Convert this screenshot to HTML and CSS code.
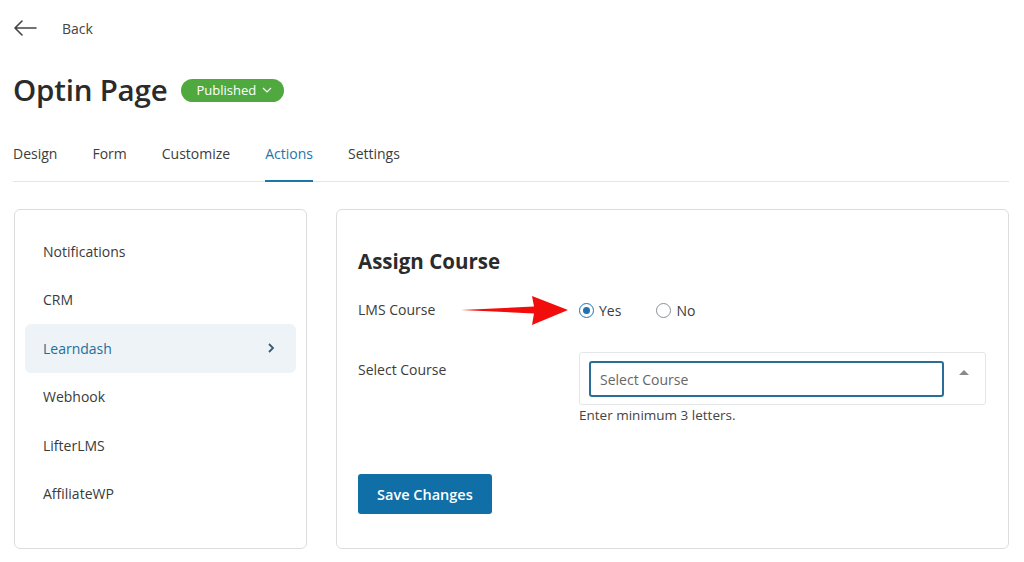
FILE: index.html
```html
<!DOCTYPE html>
<html lang="en">

<head>
  <meta charset="UTF-8">
  <meta name="viewport" content="width=device-width, initial-scale=1.0">
  <link rel="stylesheet" href="styles.css">
</head>

<body>
  <div class="page">
    <!-- Back link -->
    <a class="back" href="#">
      <svg class="back-icon" width="24" height="16" viewBox="0 0 24 16">
        <path d="M23 8H2M9 1L2 8l7 7" fill="none" stroke="#444" stroke-width="1.6" stroke-linecap="round" stroke-linejoin="round"/>
      </svg>
      <span>Back</span>
    </a>

    <div class="title-row">
      <h1>Optin Page</h1>
      <span class="status">Published
        <svg width="10" height="6" viewBox="0 0 10 6"><path d="M1 1l4 4 4-4" fill="none" stroke="#fff" stroke-width="1.2"/></svg>
      </span>
    </div>

    <nav class="tabs">
      <a href="#">Design</a>
      <a href="#">Form</a>
      <a href="#">Customize</a>
      <a href="#" class="active">Actions</a>
      <a href="#">Settings</a>
    </nav>

    <div class="columns">
      <aside class="card side-menu">
        <a href="#">Notifications</a>
        <a href="#">CRM</a>
        <a href="#" class="active">Learndash
          <svg width="8" height="10" viewBox="0 0 8 10"><path d="M2 1l4 4-4 4" fill="none" stroke="#3a5a70" stroke-width="1.8"/></svg>
        </a>
        <a href="#">Webhook</a>
        <a href="#">LifterLMS</a>
        <a href="#">AffiliateWP</a>
      </aside>

      <section class="card panel">
        <h2>Assign Course</h2>

        <div class="field lms">
          <label class="field-label">LMS Course</label>
          <div class="radios">
            <label class="radio checked"><span class="dot"></span>Yes</label>
            <label class="radio"><span class="dot"></span>No</label>
          </div>
          <!-- annotation arrow -->
          <svg class="pointer" width="110" height="32" viewBox="0 0 110 32">
            <path d="M1 16 L74 12.5 L72 2 L108 16 L72 31 L74 19.5 Z" fill="#f20d0d"/>
          </svg>
        </div>

        <div class="field">
          <label class="field-label select-label">Select Course</label>
          <div class="select-wrap">
            <div class="select-box">
              <input type="text" placeholder="Select Course">
              <span class="caret"></span>
            </div>
            <p class="hint">Enter minimum 3 letters.</p>
          </div>
        </div>

        <button type="button" class="save">Save Changes</button>
      </section>
    </div>
  </div>
</body>

</html>
```

FILE: styles.css
```css
body, html {
  margin: 0;
  padding: 0;
  font-family: "Open Sans", "Noto Sans", sans-serif;
  background-color: #ffffff;
  color: #333333;
}

a {
  text-decoration: none;
  color: inherit;
}

.page {
  padding: 0 15px 0 13px;
}

/* Back link */
.back {
  display: flex;
  align-items: center;
  height: 56px;
  font-size: 14px;
  color: #444444;
}

.back-icon {
  margin-right: 25px;
}

.title-row {
  display: flex;
  align-items: center;
  height: 66px;
}

.title-row h1 {
  margin: 0;
  font-size: 29.5px;
  font-weight: 600;
  color: #2b2b2b;
  letter-spacing: -0.2px;
}

.status {
  display: inline-flex;
  align-items: center;
  gap: 6px;
  margin-left: 14px;
  margin-top: 2px;
  height: 23px;
  padding: 0 12px 0 15px;
  border-radius: 12px;
  background-color: #4fa93f;
  color: #ffffff;
  font-size: 13px;
}

/* Tabs */
.tabs {
  display: flex;
  height: 59px;
  border-bottom: 1px solid #e2e4e7;
}

.tabs a {
  display: flex;
  align-items: center;
  padding-top: 5px;
  margin-right: 35px;
  font-size: 14px;
  color: #3c3c3c;
  border-bottom: 2px solid transparent;
  margin-bottom: -1px;
}

.tabs a.active {
  color: #1e76a6;
  border-bottom-color: #1e76a6;
}

/* Columns */
.columns {
  display: flex;
  gap: 29px;
  margin-top: 27px;
}

.card {
  border: 1px solid #dcdcde;
  border-radius: 6px;
  background: #ffffff;
  height: 340px;
  box-sizing: border-box;
}

.side-menu {
  width: 293px;
  flex-shrink: 0;
  margin-left: 1px;
  padding: 17px 10px 0 10px;
  display: flex;
  flex-direction: column;
}

.side-menu a {
  display: flex;
  align-items: center;
  justify-content: space-between;
  height: 48.5px;
  flex-shrink: 0;
  padding: 0 21px 0 18px;
  border-radius: 6px;
  font-size: 14px;
  font-weight: 500;
  color: #3a3a3a;
}

.side-menu a.active {
  background-color: #edf3f7;
  color: #1f6f9c;
}

.panel {
  flex: 1;
  padding: 0 21px;
}

.panel h2 {
  margin: 37px 0 24px;
  font-size: 20.5px;
  line-height: 28px;
  font-weight: 700;
  color: #2b2b2b;
}

.field {
  display: flex;
  align-items: flex-start;
  position: relative;
}

.field.lms {
  height: 40px;
  margin-bottom: 13px;
}

.field-label {
  width: 221px;
  font-size: 14px;
  color: #3c3c3c;
  line-height: 22px;
}

.select-label {
  margin-top: 7px;
}

.radios {
  display: flex;
  gap: 35px;
}

.radio {
  display: flex;
  align-items: center;
  height: 22px;
  font-size: 14px;
  color: #3c3c3c;
}

.dot {
  width: 15px;
  height: 15px;
  border: 1px solid #8c8f94;
  border-radius: 50%;
  margin-right: 5px;
  box-sizing: border-box;
  position: relative;
}

.radio.checked .dot {
  border-color: #2271b1;
}

.radio.checked .dot::after {
  content: "";
  position: absolute;
  top: 3px;
  left: 3px;
  width: 7px;
  height: 7px;
  border-radius: 50%;
  background-color: #2271b1;
}

.pointer {
  position: absolute;
  left: 102px;
  top: -5px;
}

.select-wrap {
  width: 407px;
}

.select-box {
  display: flex;
  align-items: center;
  border: 1px solid #e4e6e8;
  border-radius: 3px;
  height: 53px;
  box-sizing: border-box;
  padding: 0 9px;
}

.select-box input {
  width: 355px;
  height: 36px;
  box-sizing: border-box;
  border: 2px solid #2a6d98;
  border-radius: 3px;
  padding: 0 9px;
  font-family: inherit;
  font-size: 14px;
  outline: none;
  margin-top: 1px;
}

.select-box input::placeholder {
  color: #666666;
}

.caret {
  margin-left: 15px;
  margin-top: -12px;
  width: 0;
  height: 0;
  border-left: 5px solid transparent;
  border-right: 5px solid transparent;
  border-bottom: 5px solid #8a8a8a;
}

.hint {
  margin: 1px 0 0;
  font-size: 13.5px;
  line-height: 18px;
  color: #444444;
}

.save {
  margin-top: 50px;
  height: 40px;
  padding: 0 19px;
  background-color: #0f6fa6;
  color: #ffffff;
  border: none;
  border-radius: 3px;
  font-family: inherit;
  font-size: 14.5px;
  font-weight: 600;
  cursor: pointer;
}
```
